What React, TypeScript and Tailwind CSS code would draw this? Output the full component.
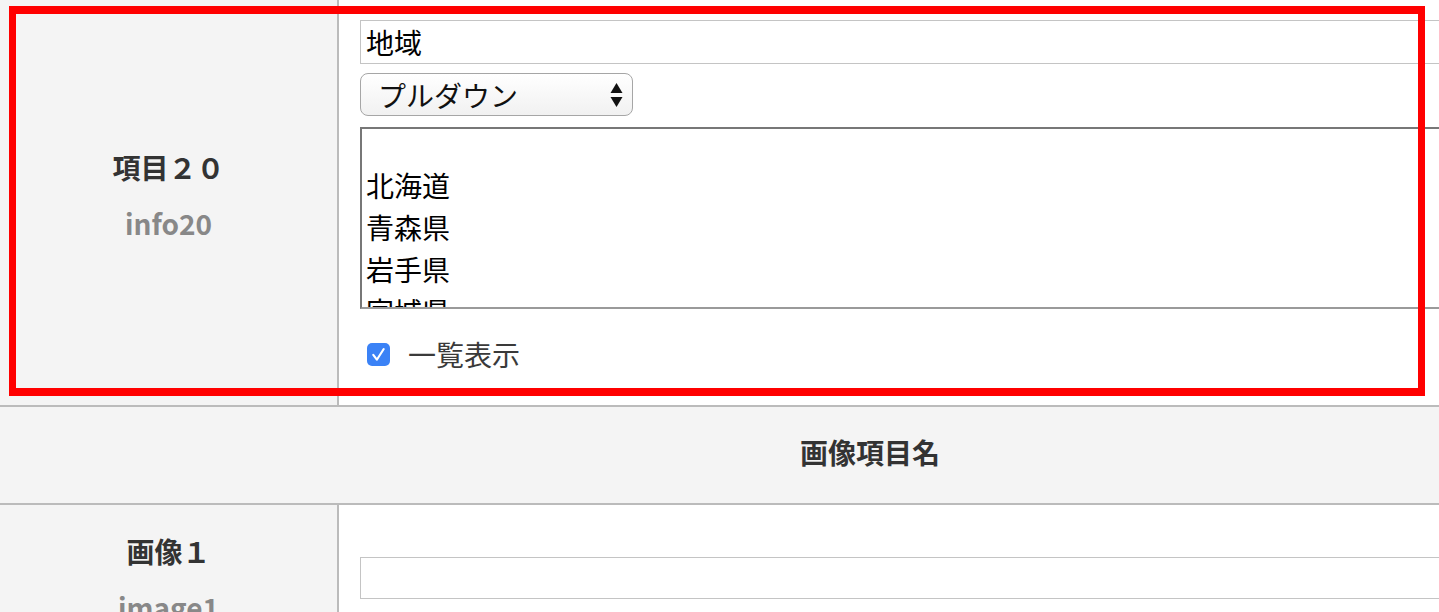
import React from "react";

const font = { fontFamily: '"Noto Sans CJK JP", "Noto Sans", sans-serif' };

const prefectures = ["北海道", "青森県", "岩手県", "宮城県", "秋田県"];

function SelectArrows() {
  return (
    <svg width="13" height="26" viewBox="0 0 13 26" className="shrink-0">
      <path d="M6.5 1 L12.5 11 L0.5 11 Z" fill="#111" />
      <path d="M0.5 15 L12.5 15 L6.5 25 Z" fill="#111" />
    </svg>
  );
}

function CheckBox() {
  return (
    <span className="flex h-[23px] w-[23px] items-center justify-center rounded-[5px] bg-[#3b82f6]">
      <svg width="19" height="19" viewBox="0 0 16 16" fill="none">
        <path d="M3.6 8.4 L6.6 12.4 L12.4 3.4" stroke="#fff" strokeWidth="1.8" strokeLinecap="round" strokeLinejoin="round" />
      </svg>
    </span>
  );
}

function LabelCell({ title, name, className = "" }: { title: string; name: string; className?: string }) {
  return (
    <div className={`flex w-[339px] shrink-0 flex-col items-center border-r-2 border-[#bbbbbb] bg-[#f4f4f4] ${className}`}>
      <div className="text-[28px] font-bold leading-[40px] text-[#333]">{title}</div>
      <div className="mt-[16px] text-[28px] font-bold leading-[40px] text-[#888]">{name}</div>
    </div>
  );
}

export default function App() {
  return (
    <div className="relative h-[612px] w-[1439px] overflow-hidden bg-white" style={font}>
      <div className="w-[1740px]">
        {/* info20 row */}
        <div className="flex h-[407px] border-b-2 border-[#bbbbbb]">
          <LabelCell title="項目２０" name="info20" className="justify-center pb-[16px]" />
          <div className="flex-1 pl-[21px] pt-[20px]">
            <div className="flex h-[44px] items-center border border-[#c4c4c4] bg-white pl-[5px] text-[28px] text-black">
              地域
            </div>
            <div className="mt-[9px] flex h-[43px] w-[273px] items-center justify-between rounded-[8px] border border-[#a6a6a6] bg-gradient-to-b from-white to-[#f1f1f1] pl-[17px] pr-[9px] text-[28px] text-[#111]">
              <span>プルダウン</span>
              <SelectArrows />
            </div>
            <div className="mt-[11px] h-[182px] overflow-hidden border-2 border-[#777] border-b-[#9a9a9a] pl-[4px] pt-[35px] text-[28px] leading-[42px] text-black">
              {prefectures.map((p) => (
                <div key={p}>{p}</div>
              ))}
            </div>
            <div className="mt-[25px] flex items-center pl-[7px]">
              <CheckBox />
              <span className="ml-[18px] text-[28px] leading-[40px] text-[#3a3a3a]">一覧表示</span>
            </div>
          </div>
        </div>

        {/* header */}
        <div className="flex h-[98px] items-center justify-center border-b-2 border-[#bbbbbb] bg-[#f4f4f4] pb-[6px]">
          <span className="text-[28px] font-bold text-[#333]">画像項目名</span>
        </div>

        {/* image1 row */}
        <div className="flex h-[200px]">
          <LabelCell title="画像１" name="image1" className="pt-[26px]" />
          <div className="flex-1 pl-[21px] pt-[52px]">
            <div className="h-[42px] border border-[#c4c4c4] bg-white" />
          </div>
        </div>
      </div>

      {/* highlight frame */}
      <div className="pointer-events-none absolute left-[9px] top-[6px] h-[390px] w-[1416px] border-x-[7px] border-y-[8px] border-[#ff0000]" />
    </div>
  );
}
